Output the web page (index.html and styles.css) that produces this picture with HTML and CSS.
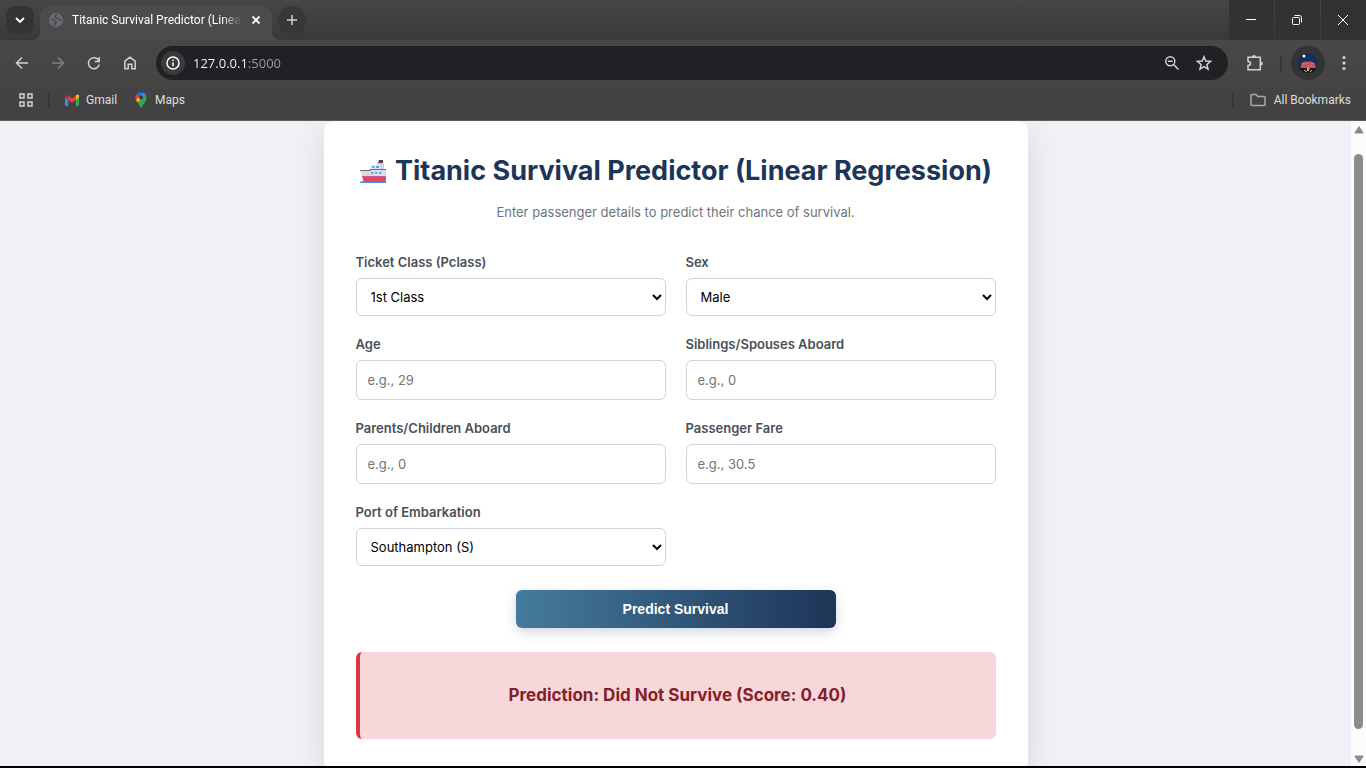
FILE: index.html
```html
<!DOCTYPE html>
<html lang="en">
<head>
<meta charset="utf-8">
<meta name="viewport" content="width=device-width, initial-scale=1">
<title>Titanic Survival Predictor (Linear Regression)</title>
<link rel="stylesheet" href="styles.css">
</head>
<body>
<header class="chrome">
  <div class="tabstrip">
    <button class="tab-search" aria-label="Search tabs">
      <svg width="12" height="12" viewBox="0 0 12 12"><path d="M2 4l4 4 4-4" class="stroke thick"/></svg>
    </button>
    <div class="tab">
      <svg class="favicon" width="14" height="14" viewBox="0 0 14 14"><circle cx="7" cy="7" r="7" fill="#686c72"/><path d="M1.500 6.500h2.500q1.500 0 1.500 1.200T7 9v1.500H5.500V13M8 1.500q-2 1-2 2.300T8 5.500h1.500q.5 2 3 1.500" fill="none" stroke="#4b4b4d" stroke-width="1.500"/></svg>
      <span class="tab-title">Titanic Survival Predictor (Linear</span>
      <button class="tab-close" aria-label="Close tab"><svg width="10" height="10" viewBox="0 0 10 10"><path d="M1.500 1.500l7 7M8.500 1.500l-7 7" class="stroke thick"/></svg></button>
    </div>
    <button class="new-tab" aria-label="New tab"><svg width="12" height="12" viewBox="0 0 12 12"><path d="M6 1v10M1 6h10" class="stroke soft"/></svg></button>
    <div class="window-controls">
      <button aria-label="Minimize"><svg width="12" height="12" viewBox="0 0 12 12"><path d="M1 5.500h10" class="stroke thin"/></svg></button>
      <button aria-label="Restore"><svg width="12" height="12" viewBox="0 0 12 12"><rect x="1.500" y="3.500" width="7" height="7" rx="1" class="stroke thin"/><path d="M3.500 1.500h5a2 2 0 0 1 2 2v5" class="stroke thin"/></svg></button>
      <button aria-label="Close"><svg width="12" height="12" viewBox="0 0 12 12"><path d="M1 1l10 10M11 1L1 11" class="stroke thin"/></svg></button>
    </div>
  </div>
  <div class="toolbar">
    <nav class="nav-buttons" aria-label="Navigation">
      <button aria-label="Back"><svg width="16" height="16" viewBox="0 0 16 16"><path d="M14 8H3M8 2.500L2.500 8 8 13.500" class="stroke soft"/></svg></button>
      <button class="dim" aria-label="Forward"><svg width="16" height="16" viewBox="0 0 16 16"><path d="M2 8h11M8 2.500L13.500 8 8 13.500" class="stroke"/></svg></button>
      <button aria-label="Reload"><svg width="16" height="16" viewBox="0 0 16 16"><path d="M13 6A5.500 5.500 0 1 0 13.300 9.500M13.200 2v4.500H8.800" class="stroke soft"/></svg></button>
      <button aria-label="Home"><svg width="16" height="16" viewBox="0 0 16 16"><path d="M2.800 6.200L8 2.200l5.200 4v7.600H9.800V9.200H6.200v4.600H2.800z" class="stroke soft"/></svg></button>
    </nav>
    <div class="omnibox">
      <button class="site-info" aria-label="Site information"><svg width="14" height="14" viewBox="0 0 14 14"><circle cx="7" cy="7" r="6" class="stroke"/><path d="M7 6.200v4M7 3.600v1.400" class="stroke"/></svg></button>
      <input class="url" type="text" value="127.0.0.1:5000" aria-label="Address">
      <button class="box-icon" aria-label="Zoom"><svg width="16" height="16" viewBox="0 0 16 16"><circle cx="6.300" cy="6.300" r="4.500" class="stroke soft"/><path d="M9.800 9.800l4.700 4.700M4 6.300h4.600" class="stroke soft"/></svg></button>
      <button class="box-icon" aria-label="Bookmark"><svg width="16" height="16" viewBox="0 0 16 16"><path d="M8 1.800l1.800 4.300 4.700.4-3.600 3 1.100 4.600L8 11.700l-4 2.400 1.100-4.600-3.600-3 4.700-.4z" class="stroke soft"/></svg></button>
    </div>
    <button class="extensions" aria-label="Extensions"><svg width="20" height="20" viewBox="0 0 20 20"><path d="M3 4.300h12.300v12.400H3v-4.100q2.600-.4 2.600-2.100T3 8.400z" class="stroke soft"/><path d="M7 4a2 2 0 0 1 4 0zM15.800 8.500a2 2 0 0 1 0 4z" fill="#d2d2d2"/></svg></button>
    <span class="divider"></span>
    <button class="profile" aria-label="Profile"><svg width="20" height="20" viewBox="0 0 20 20"><circle cx="10" cy="10" r="10" fill="#12305f"/><path d="M1 14h18a9.800 9.800 0 0 1-18 0" fill="#0a1730"/><circle cx="6" cy="3" r="1.500" fill="#fff"/><path d="M3.500 10l3-1.500h7l3 1.500 1.500 5H2.500z" fill="#c4505c"/><path d="M5 10.500h2m1 0h3m2 0h2M4 12.500h3m2 0h6" stroke="#7589c5"/><path d="M9 14h3l-1 4H9z" fill="#ff7425"/><path d="M10 15v3M6 17l3 2m5-2l-2 2" stroke="#ffcf3e"/></svg></button>
    <button class="menu" aria-label="Menu"><svg width="4" height="16" viewBox="0 0 4 16"><circle cx="2" cy="2.500" r="1.600"/><circle cx="2" cy="8" r="1.600"/><circle cx="2" cy="13.500" r="1.600"/></svg></button>
  </div>
  <nav class="bookmarks" aria-label="Bookmarks">
    <button class="apps" aria-label="Apps"><svg width="16" height="16" viewBox="0 0 16 16"><path d="M2 2h4v4H2zM10 2h4v4h-4zM2 10h4v4H2zM10 10h4v4h-4z" class="stroke soft"/></svg></button>
    <span class="divider"></span>
    <a class="bookmark gmail" href="#gmail"><svg width="14" height="12" viewBox="0 0 14 12"><path d="M0 2v9a1 1 0 0 0 1 1h2.200V5z" fill="#4285f4"/><path d="M14 2v9a1 1 0 0 1-1 1h-2.200V5z" fill="#34a853"/><path d="M10.800 1.600L12 .7c1-.6 2 0 2 1.200v1.600L10.800 6z" fill="#fbbc04"/><path d="M3.200 1.600L7 4.500l3.800-2.900V6L7 8.800 3.200 6z" fill="#ea4335"/><path d="M0 1.900C0 .7 1 0 2 .7l1.200.9V6L0 3.500z" fill="#c5221f"/></svg>Gmail</a>
    <a class="bookmark maps" href="#maps"><svg width="12" height="16" viewBox="0 0 12 16"><path d="M6 0a5.500 5.500 0 0 0-4.200 2L4.400 4.200 8 .4A6 6 0 0 0 6 0z" fill="#1a73e8"/><path d="M1.800 2A5.500 5.500 0 0 0 1 8l3.400-3.800z" fill="#ea4335"/><path d="M8 .4L4.600 4.200l3 2.500L11 2.900A5.500 5.500 0 0 0 8 .4z" fill="#4285f4"/><path d="M4.400 4.200L1 8l1.500 2.500 5.100-3.800A2.100 2.100 0 0 1 4.400 4.200z" fill="#fbbc04"/><path d="M11 2.900L2.500 10.500C4 12.300 4.700 13.200 5.400 15.500q.6 1 1.200 0C7.500 12.200 11.500 10.500 11.500 5.500A5.500 5.500 0 0 0 11 2.900z" fill="#34a853"/><circle cx="6" cy="5.500" r="2" fill="#343b45"/></svg>Maps</a>
    <span class="divider push"></span>
    <a class="bookmark all" href="#bookmarks"><svg width="16" height="14" viewBox="0 0 16 14"><path d="M1 2.500a1 1 0 0 1 1-1h4l1.700 2H14a1 1 0 0 1 1 1v7a1 1 0 0 1-1 1H2a1 1 0 0 1-1-1z" class="stroke thin"/></svg>All Bookmarks</a>
  </nav>
</header>
<div class="viewport">
  <main class="page">
    <section class="card">
      <h1 class="title"><svg class="ship" width="28" height="28" viewBox="0 0 28 28"><path d="M19 6l1-3h4v3z" fill="#51435b"/><path d="M18 6h7v8h-7z" fill="#d8d1e1"/><path d="M12 8h9v4h-9z" fill="#eae5ef"/><path d="M13 9h2.500v2H13zM17 9h3v2h-3z" fill="#37bdf6"/><path d="M1 13h9l1-1h16v10H4z" fill="#e0d9e8"/><path d="M1 13h9l1-1h16v1H12l-1 1H1z" fill="#796c82"/><path d="M12 15h2.500v2H12zm4 0h2.500v2H16zm4 0h2.500v2H20z" fill="#3bc3fa"/><path d="M3 19h24v7H5z" fill="#f0425f"/><path d="M3 19h24v1H3.500z" fill="#bd6488"/><path d="M1 25l3-1 3 1 3-1 4 1 4-1 4 1 5-1v2H1z" fill="#438ee8"/></svg><span>Titanic Survival Predictor (Linear Regression)</span></h1>
      <p class="subtitle">Enter passenger details to predict their chance of survival.</p>
      <form class="form">
        <div class="fields">
          <div class="field"><label for="pclass">Ticket Class (Pclass)</label><select id="pclass"><option>1st Class</option><option>2nd Class</option><option>3rd Class</option></select></div>
          <div class="field"><label for="sex">Sex</label><select id="sex"><option>Male</option><option>Female</option></select></div>
          <div class="field"><label for="age">Age</label><input id="age" type="number" placeholder="e.g., 29"></div>
          <div class="field"><label for="sibsp">Siblings/Spouses Aboard</label><input id="sibsp" type="number" placeholder="e.g., 0"></div>
          <div class="field"><label for="parch">Parents/Children Aboard</label><input id="parch" type="number" placeholder="e.g., 0"></div>
          <div class="field"><label for="fare">Passenger Fare</label><input id="fare" type="number" placeholder="e.g., 30.5"></div>
          <div class="field"><label for="port">Port of Embarkation</label><select id="port"><option>Southampton (S)</option><option>Cherbourg (C)</option><option>Queenstown (Q)</option></select></div>
        </div>
        <button class="submit" type="submit">Predict Survival</button>
      </form>
      <div class="result" role="status">Prediction: Did Not Survive (Score: 0.40)</div>
    </section>
  </main>
  <div class="scrollbar" aria-hidden="true">
    <svg width="10" height="8" viewBox="0 0 10 8"><path d="M5 0l4.500 6.500q0 1-1 1h-7q-1 0-1-1z"/></svg>
    <span class="thumb"></span>
    <svg width="10" height="8" viewBox="0 0 10 8"><path d="M5 8L.5 1.500q0-1 1-1h7q1 0 1 1z"/></svg>
  </div>
</div>
</body>
</html>
```
FILE: styles.css
```css
* { box-sizing: border-box; }

body {
  margin: 0;
  height: 100vh;
  display: flex;
  flex-direction: column;
  overflow: hidden;
  border-bottom: 2px solid #000;
  background: #f0f1f6;
  font-family: Inter, "Open Sans", sans-serif;
  font-size: 13px;
}

button {
  padding: 0;
  border: 0;
  background: none;
  display: flex;
  align-items: center;
  justify-content: center;
  flex: none;
}

svg { flex: none; display: block; }

.stroke { fill: none; stroke: #fff; stroke-width: 1.5; }
.stroke.thick { stroke-width: 1.8; }
.stroke.thin { stroke-width: 1; }
.stroke.soft { stroke: #d2d2d2; }
.dim .stroke { stroke: #808080; }

/* Browser frame */
.chrome {
  flex: none;
  background: linear-gradient(#4b4b4b, #414141);
  border-bottom: 1px solid #5c5c5c;
  font-family: Roboto, "Open Sans", sans-serif;
  font-size: 12px;
  color: #dedede;
}

.tabstrip {
  display: flex;
  height: 40px;
  padding: 6px 0 0 6px;
  background: linear-gradient(#464646, #393939);
}

.tab-search {
  width: 28px;
  height: 28px;
  border-radius: 9px;
  background: #343434;
}

.tab {
  position: relative;
  display: flex;
  align-items: center;
  width: 232px;
  height: 34px;
  margin-left: 6px;
  padding: 0 10px 6px 9px;
  border-radius: 10px 10px 0 0;
  background: #4b4b4b;
  color: #fff;
}

.tab::before, .tab::after {
  content: "";
  position: absolute;
  bottom: 0;
  width: 8px;
  height: 8px;
}
.tab::before { left: -8px; background: radial-gradient(circle at 0 0, transparent 8px, #4b4b4b 8px); }
.tab::after { right: -8px; background: radial-gradient(circle at 100% 0, transparent 8px, #4b4b4b 8px); }

.tab-title {
  flex: 1;
  min-width: 0;
  margin: 0 8px 0 9px;
  white-space: nowrap;
  mask-image: linear-gradient(to right, #000 88%, transparent);
}

.tab-close { width: 12px; height: 16px; }

.new-tab {
  width: 28px;
  height: 28px;
  margin-left: 6px;
  border-radius: 14px;
  background: #373737;
}

.window-controls {
  display: flex;
  gap: 1px;
  margin: -6px 0 0 auto;
}
.window-controls button { width: 45px; height: 40px; padding-right: 2px; background: #323232; }

.toolbar {
  display: flex;
  align-items: center;
  height: 46px;
  padding: 0 14px;
}

.nav-buttons { display: flex; gap: 20px; }

.omnibox {
  flex: 1;
  display: flex;
  align-items: center;
  height: 34px;
  margin: 0 17px 0 18px;
  padding: 0 16px 0 5px;
  border-radius: 17px;
  background: #202124;
}

.site-info {
  width: 24px;
  height: 24px;
  border-radius: 12px;
  background: #3a3a3b;
}

.url {
  flex: 1;
  min-width: 0;
  height: 24px;
  margin-left: 8px;
  padding: 0;
  border: 0;
  background: linear-gradient(to right, #fff 54px, #9aa0a6 54px);
  background-clip: text;
  -webkit-text-fill-color: transparent;
  color: #fff;
  font: 13px "Open Sans", "Noto Sans", sans-serif;
}

.box-icon { margin-left: 16px; }

.divider { flex: none; width: 2px; height: 16px; background: #373737; }
.extensions { margin-right: 15px; }

.profile {
  width: 34px;
  height: 34px;
  margin: 0 17px 0 9px;
  border-radius: 17px;
  background: #333;
}

.menu { margin-right: 6px; fill: #d2d2d2; }

.bookmarks {
  display: flex;
  align-items: center;
  height: 34px;
  padding: 0 15px 6px 18px;
}

.apps { margin-right: 14px; }
.push { margin-left: auto; }

.bookmark {
  display: flex;
  align-items: center;
  gap: 7px;
  margin-left: 15px;
  color: inherit;
  text-decoration: none;
}
.bookmark.maps { margin-left: 18px; gap: 8px; }
.bookmark.all { margin-left: 16px; gap: 8px; }
.bookmark.all .stroke { stroke: #ababab; stroke-width: 1.5; }

/* Page area */
.viewport {
  flex: 1;
  min-height: 0;
  display: flex;
}

.page {
  flex: 1;
  min-width: 0;
  overflow: hidden;
}

.card {
  width: 100%;
  max-width: 704px;
  margin: 0 auto;
  padding: 32px;
  border-radius: 10px;
  background: #fff;
  box-shadow: 0 8px 32px rgba(0, 0, 0, 0.1);
}

.title {
  display: flex;
  align-items: center;
  justify-content: center;
  gap: 8px;
  margin: 0 0 13px;
  color: #1d3557;
  font-size: 27px;
  font-weight: 700;
  line-height: 36px;
  white-space: nowrap;
}

.subtitle {
  margin: 0 0 30px;
  color: #6c757d;
  line-height: 20px;
  text-align: center;
}

.fields {
  display: grid;
  grid-template-columns: 1fr 1fr;
  gap: 18px 20px;
}

.field { display: flex; flex-direction: column; gap: 6px; }

.field label {
  color: #495057;
  font-weight: 600;
  line-height: 20px;
}

.field select, .field input {
  width: 100%;
  height: 38px;
  padding: 0 10px;
  border: 1px solid #ced4da;
  border-radius: 6px;
  background: #fff;
  color: #000;
  font: inherit;
}
.field input { height: 40px; padding: 0 11px; }
.field input::placeholder { color: #757575; }

.submit {
  width: 50%;
  height: 38px;
  margin: 24px auto;
  border-radius: 6px;
  background: linear-gradient(to right, #457b9d, #1d3557);
  box-shadow: 0 4px 12px rgba(29, 53, 87, 0.2);
  color: #fff;
  font: 700 14px "Liberation Sans", Arial, sans-serif;
}

.result {
  padding: 28px;
  border-left: 4px solid #dc3545;
  border-radius: 6px;
  background: #f8d7da;
  color: #842029;
  font-size: 17px;
  font-weight: 700;
  line-height: 31px;
  text-align: center;
}

.scrollbar {
  flex: none;
  display: flex;
  flex-direction: column;
  align-items: center;
  width: 15px;
  padding: 5px 0 3px;
  background: #fcfcfc;
  fill: #8b8b8b;
}

.thumb {
  flex: 1;
  width: 9px;
  margin: 20px 0 26px;
  border-radius: 5px;
  background: #8b8b8b;
}
```
